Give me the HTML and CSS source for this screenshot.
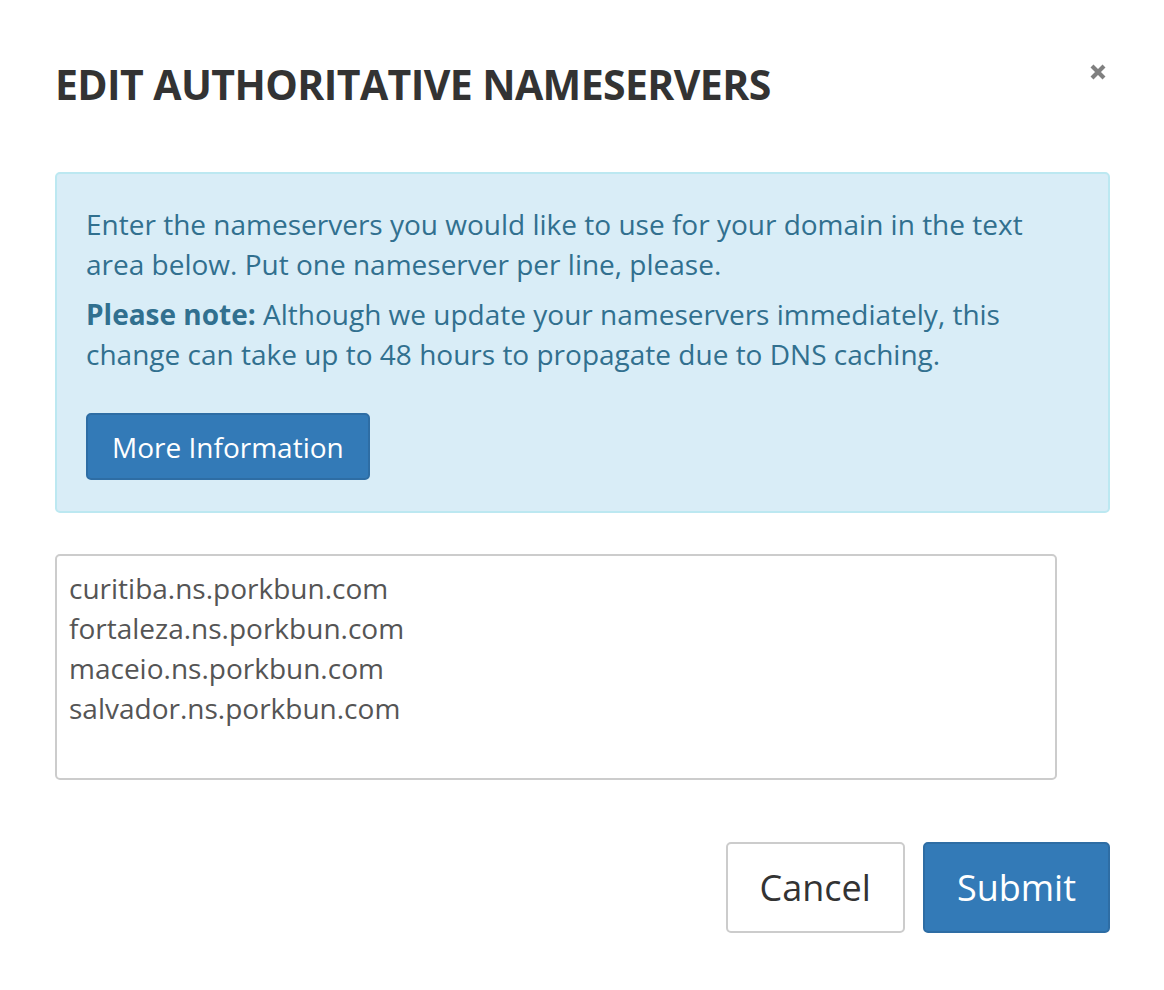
FILE: index.html
```html
<!DOCTYPE html>
<html lang="en">
<head>
  <meta charset="UTF-8" />
  <meta name="viewport" content="width=device-width, initial-scale=1.0" />
  <title>Edit Authoritative Nameservers</title>
  <link rel="stylesheet" href="styles.css">
</head>
<body>
  <div class="modal">
    <div class="modal-header">
      <h4 class="modal-title">EDIT AUTHORITATIVE NAMESERVERS</h4>
      <button class="close" type="button" aria-label="Close">
        <svg width="18" height="18" viewBox="0 0 18 18"><path d="M3 3 L15 15 M15 3 L3 15" stroke="#808080" stroke-width="4.2" stroke-linecap="butt"/></svg>
      </button>
    </div>
    <div class="modal-body">
      <div class="alert">
        <p>Enter the nameservers you would like to use for your domain in the text area below. Put one nameserver per line, please.</p>
        <p><strong>Please note:</strong> Although we update your nameservers immediately, this change can take up to 48 hours to propagate due to DNS caching.</p>
        <button class="btn btn-primary btn-info-more" type="button">More Information</button>
      </div>
      <textarea class="ns-list" rows="5">curitiba.ns.porkbun.com
fortaleza.ns.porkbun.com
maceio.ns.porkbun.com
salvador.ns.porkbun.com</textarea>
    </div>
    <div class="modal-footer">
      <button class="btn btn-default btn-lg" type="button">Cancel</button>
      <button class="btn btn-primary btn-lg" type="button">Submit</button>
    </div>
  </div>
</body>
</html>
```

FILE: styles.css
```css
* { box-sizing: border-box; }
body {
  margin: 0;
  background: #fff;
  font-family: "Open Sans", "Noto Sans", sans-serif;
  color: #333;
}
.modal {
  width: 1164px;
  padding: 0 54px 0 55px;
}
.modal-header {
  display: flex;
  justify-content: space-between;
  align-items: flex-start;
  padding-top: 56px;
}
.modal-title {
  margin: 0;
  font-size: 41px;
  line-height: 56px;
  font-weight: 700;
  letter-spacing: -0.6px;
  color: #333;
}
.close {
  border: none;
  background: none;
  padding: 0;
  margin-top: 7px;
  margin-right: 3px;
  cursor: pointer;
}
.modal-body {
  padding-top: 60px;
}
.alert {
  background: #d9edf7;
  border: 2px solid #bce8f1;
  border-radius: 5px;
  color: #31708f;
  padding: 30px 30px 31px 29px;
  font-size: 28px;
  line-height: 40px;
}
.alert p {
  margin: 0 0 10px;
}
.alert strong { font-weight: 700; }
.btn {
  font-family: "Open Sans", "Noto Sans", sans-serif;
  border-radius: 5px;
  cursor: pointer;
}
.btn-primary {
  background: #337ab7;
  border: 2px solid #2e6da4;
  color: #fff;
}
.btn-default {
  background: #fff;
  border: 2px solid #ccc;
  color: #333;
}
.btn-info-more {
  margin-top: 29px;
  height: 67px;
  padding: 0 24px;
  font-size: 28px;
}
.ns-list {
  display: block;
  margin-top: 41px;
  width: 1002px;
  height: 226px;
  border: 2px solid #ccc;
  border-radius: 5px;
  padding: 12px 12px;
  font-family: "Open Sans", "Noto Sans", sans-serif;
  font-size: 28px;
  line-height: 40px;
  color: #555;
  resize: none;
}
.modal-footer {
  display: flex;
  justify-content: flex-end;
  gap: 18px;
  padding-top: 62px;
}
.btn-lg {
  height: 91px;
  padding: 0 32px;
  font-size: 36px;
}
```
